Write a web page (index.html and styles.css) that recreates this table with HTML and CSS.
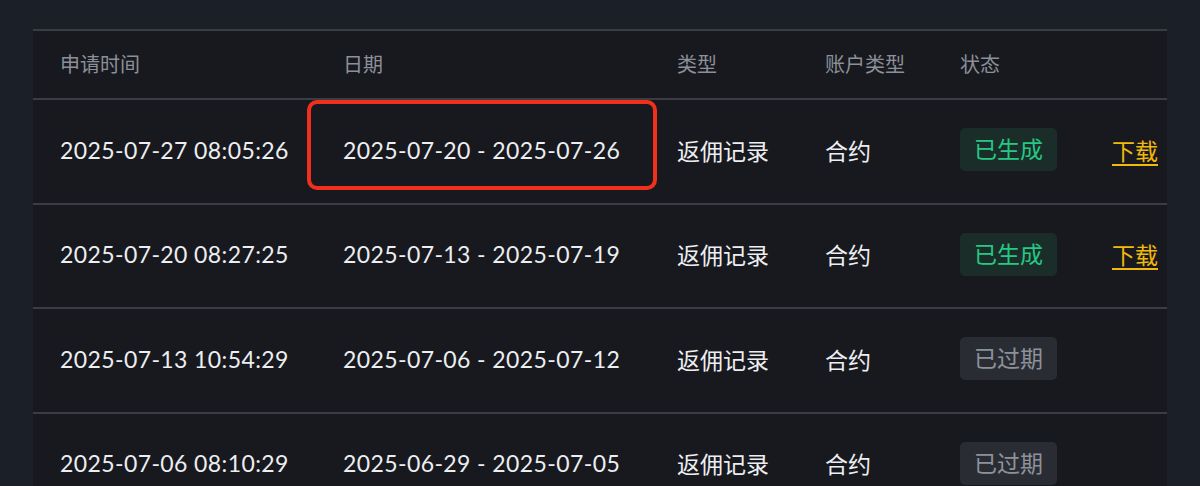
FILE: index.html
```html
<!DOCTYPE html>
<html lang="zh">
<head>
<meta charset="utf-8">
<link rel="stylesheet" href="styles.css">
</head>
<body>
<div class="page">
  <div class="table">
    <div class="row head">
      <div class="cell">申请时间</div>
      <div class="cell">日期</div>
      <div class="cell">类型</div>
      <div class="cell">账户类型</div>
      <div class="cell">状态</div>
      <div class="cell"></div>
    </div>
    <div class="row">
      <div class="cell num">2025-07-27 08:05:26</div>
      <div class="cell num date-cell">2025-07-20 - 2025-07-26<span class="mark"></span></div>
      <div class="cell">返佣记录</div>
      <div class="cell">合约</div>
      <div class="cell"><span class="badge ok">已生成</span></div>
      <div class="cell"><a class="dl" href="#">下载</a></div>
    </div>
    <div class="row">
      <div class="cell num">2025-07-20 08:27:25</div>
      <div class="cell num">2025-07-13 - 2025-07-19</div>
      <div class="cell">返佣记录</div>
      <div class="cell">合约</div>
      <div class="cell"><span class="badge ok">已生成</span></div>
      <div class="cell"><a class="dl" href="#">下载</a></div>
    </div>
    <div class="row">
      <div class="cell num">2025-07-13 10:54:29</div>
      <div class="cell num">2025-07-06 - 2025-07-12</div>
      <div class="cell">返佣记录</div>
      <div class="cell">合约</div>
      <div class="cell"><span class="badge off">已过期</span></div>
      <div class="cell"></div>
    </div>
    <div class="row">
      <div class="cell num">2025-07-06 08:10:29</div>
      <div class="cell num">2025-06-29 - 2025-07-05</div>
      <div class="cell">返佣记录</div>
      <div class="cell">合约</div>
      <div class="cell"><span class="badge off">已过期</span></div>
      <div class="cell"></div>
    </div>
  </div>
</div>
</body>
</html>
```

FILE: styles.css
```css
* { box-sizing: border-box; }
html, body {
  margin: 0;
  padding: 0;
  background: #1b2028;
  height: 486px;
  overflow: hidden;
}
body {
  font-family: Lato, "Noto Sans CJK SC", sans-serif;
  color: #eceef1;
}
.page {
  padding: 29px 33px 0 33px;
}
.table {
  background: #18191e;
  border-top: 2px solid #3a3d43;
}
.row {
  display: grid;
  grid-template-columns: 283px 334px 148px 135px 152px 1fr;
  padding-left: 27px;
  padding-bottom: 3px;
  align-items: center;
  height: 104.5px;
  border-bottom: 2px solid #3a3d43;
  font-size: 23px;
}
.row.head {
  height: 69px;
  font-size: 20px;
  color: #8b9099;
}
.cell {
  white-space: nowrap;
}
.num {
  letter-spacing: 0.4px;
}
.date-cell {
  position: relative;
  align-self: stretch;
  display: flex;
  align-items: center;
}
.mark {
  position: absolute;
  left: -36px;
  top: 0;
  width: 350px;
  height: 90px;
  border: 4px solid #f0301c;
  border-radius: 10px;
}
.badge {
  display: inline-block;
  padding: 0 14px;
  height: 43px;
  line-height: 43px;
  border-radius: 5px;
}
.badge.ok {
  background: #1b2d29;
  color: #25c884;
}
.badge.off {
  background: #2a2c33;
  color: #8d929a;
}
.dl {
  color: #f0b90b;
  text-decoration: underline;
  text-underline-offset: 4px;
}
```
